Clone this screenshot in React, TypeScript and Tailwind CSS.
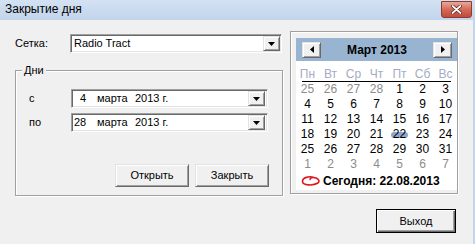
import React from 'react';

const raised =
  'border border-t-[#e3e3e3] border-l-[#e3e3e3] border-r-[#696969] border-b-[#696969] shadow-[inset_1px_1px_0_#fff,inset_-1px_-1px_0_#a0a0a0]';
const sunken =
  'border border-t-[#a0a0a0] border-l-[#a0a0a0] border-r-white border-b-white shadow-[inset_1px_1px_0_#696969,inset_-1px_-1px_0_#e3e3e3]';
const etched = 'border border-[#a0a0a0] shadow-[inset_1px_1px_0_#fff,1px_1px_0_#fff]';

const DropArrow: React.FC = () => (
  <div className={`w-[17px] h-[15px] bg-[#f0f0f0] flex items-center justify-center ${raised}`}>
    <svg width="7" height="4" viewBox="0 0 7 4">
      <path d="M0 0h7L3.5 4z" fill="#000" />
    </svg>
  </div>
);

interface DateProps {
  day: string;
}

const DateCombo: React.FC<DateProps> = ({ day }) => (
  <div className={`w-[197px] h-[19px] bg-white flex items-center pl-[2px] pr-[2px] ${sunken}`}>
    <span className="w-[12px] text-right">{day}</span>
    <span className="w-[38px] ml-[11px]">марта</span>
    <span className="flex-1">2013 г.</span>
    <DropArrow />
  </div>
);

const weekDays = ['Пн', 'Вт', 'Ср', 'Чт', 'Пт', 'Сб', 'Вс'];

const rows: { n: number; gray: boolean }[][] = [
  [25, 26, 27, 28].map((n) => ({ n, gray: true })).concat([1, 2, 3].map((n) => ({ n, gray: false }))),
  [4, 5, 6, 7, 8, 9, 10].map((n) => ({ n, gray: false })),
  [11, 12, 13, 14, 15, 16, 17].map((n) => ({ n, gray: false })),
  [18, 19, 20, 21, 22, 23, 24].map((n) => ({ n, gray: false })),
  [25, 26, 27, 28, 29, 30, 31].map((n) => ({ n, gray: false })),
  [1, 2, 3, 4, 5, 6, 7].map((n) => ({ n, gray: true })),
];

const NavButton: React.FC<{ dir: 'left' | 'right' }> = ({ dir }) => (
  <div className={`w-[19px] h-[16px] bg-[#f0f0f0] flex items-center justify-center ${raised}`}>
    <svg width="4" height="7" viewBox="0 0 4 7">
      {dir === 'left' ? <path d="M4 0v7L0 3.5z" fill="#000" /> : <path d="M0 0v7L4 3.5z" fill="#000" />}
    </svg>
  </div>
);

const Calendar: React.FC = () => (
  <div className="w-[161px] h-[152px] bg-white flex flex-col font-['Liberation_Sans',Arial,sans-serif] text-[12px]">
    <div className="h-[23px] bg-[#99b4d1] flex items-center justify-between pl-[6px] pr-[5px]">
      <NavButton dir="left" />
      <span className="font-bold text-black">Март 2013</span>
      <NavButton dir="right" />
    </div>
    <div className="grid grid-cols-[repeat(7,23px)] mt-[6px] h-[14px] leading-[14px] text-[#a3abc6]">
      {weekDays.map((d) => (
        <span key={d} className="text-center">
          {d}
        </span>
      ))}
    </div>
    <div className="h-px bg-black mx-[6px]" />
    <div className="grid grid-cols-[repeat(7,23px)] auto-rows-[15px] leading-[15px]">
      {rows.flat().map((c, i) => (
        <span key={i} className={`relative text-center ${c.gray ? 'text-[#8c8c8c]' : 'text-black'}`}>
          {c.n === 22 && !c.gray && (
            <span className="absolute left-[3px] top-[5px] w-[17px] h-[6px] rounded-full bg-[#8fa5cc]" />
          )}
          <span className="relative">{c.n}</span>
        </span>
      ))}
    </div>
    <div className="h-[17px] flex items-center pl-[5px] gap-[2px]">
      <svg width="20" height="12" viewBox="0 0 20 12">
        <path
          d="M13 2.5C8 0.8 1.5 2.5 1.5 6.5C1.5 10.5 12 11 17 8C19.5 6 17 2.5 12 2.5C9.5 2.5 8.5 4 9.5 5"
          fill="none"
          stroke="#e0141b"
          strokeWidth="1.6"
        />
      </svg>
      <span className="font-bold text-black">Сегодня: 22.08.2013</span>
    </div>
  </div>
);

export default function App() {
  return (
    <div className="w-[475px] h-[244px] bg-[#f0f0f0] flex flex-col overflow-hidden font-['Liberation_Sans',Arial,sans-serif] text-[11px] text-black">
      <div className="h-[20px] shrink-0 bg-gradient-to-b from-[#d3e1f2] to-[#c2d5ec] flex items-start justify-between pl-[5px] pr-[3px]">
        <span className="text-[12px] leading-[19px] text-black">Закрытие дня</span>
        <div className="w-[31px] h-[17px] mt-px rounded-b-[3px] border border-[#8b3b33] bg-gradient-to-b from-[#e8a896] via-[#d46a58] to-[#c14a3c] flex items-center justify-center">
          <svg width="11" height="9" viewBox="0 0 11 9">
            <path d="M1.5 1L9.5 8M9.5 1L1.5 8" stroke="#4a1a16" strokeWidth="3.2" strokeLinecap="round" />
            <path d="M1.5 1L9.5 8M9.5 1L1.5 8" stroke="#fff" strokeWidth="1.8" strokeLinecap="round" />
          </svg>
        </div>
      </div>

      <div className="flex-1 flex flex-col border-r-[2px] border-[#c3d5ec]">
        <div className="flex pt-[11px]">
          <div className="w-[283px] pl-[15px] flex flex-col">
            <div className="flex items-center mt-[3px]">
              <span className="w-[55px]">Сетка:</span>
              <div className={`w-[212px] h-[19px] bg-white flex items-center pl-[3px] pr-[1px] ${sunken}`}>
                <span className="flex-1">Radio Tract</span>
                <DropArrow />
              </div>
            </div>

            <div className={`relative mt-[17px] h-[126px] w-[268px] flex flex-col pt-[18px] pl-[13px] pr-[13px] ${etched}`}>
              <span className="absolute -top-[7px] left-[6px] px-[2px] bg-[#f0f0f0] leading-[13px]">Дни</span>
              <div className="flex flex-col gap-[5px]">
                <div className="flex items-center">
                  <span className="w-[42px]">с</span>
                  <DateCombo day="4" />
                </div>
                <div className="flex items-center">
                  <span className="w-[42px]">по</span>
                  <DateCombo day="28" />
                </div>
              </div>
              <div className="flex justify-end gap-[6px] mt-[32px]">
                <button className={`w-[74px] h-[23px] bg-[#f0f0f0] ${raised}`}>Открыть</button>
                <button className={`w-[74px] h-[23px] bg-[#f0f0f0] ${raised}`}>Закрыть</button>
              </div>
            </div>
          </div>

          <div className={`ml-[7px] w-[168px] h-[163px] pl-[5px] pt-[6px] ${etched}`}>
            <Calendar />
          </div>
        </div>

        <div className="flex justify-end pr-[17px] mt-[13px]">
          <button className="w-[80px] h-[24px] bg-[#f0f0f0] border border-black shadow-[inset_1px_1px_0_#fff,inset_-1px_-1px_0_#696969,inset_-2px_-2px_0_#a0a0a0]">
            Выход
          </button>
        </div>
      </div>
    </div>
  );
}
